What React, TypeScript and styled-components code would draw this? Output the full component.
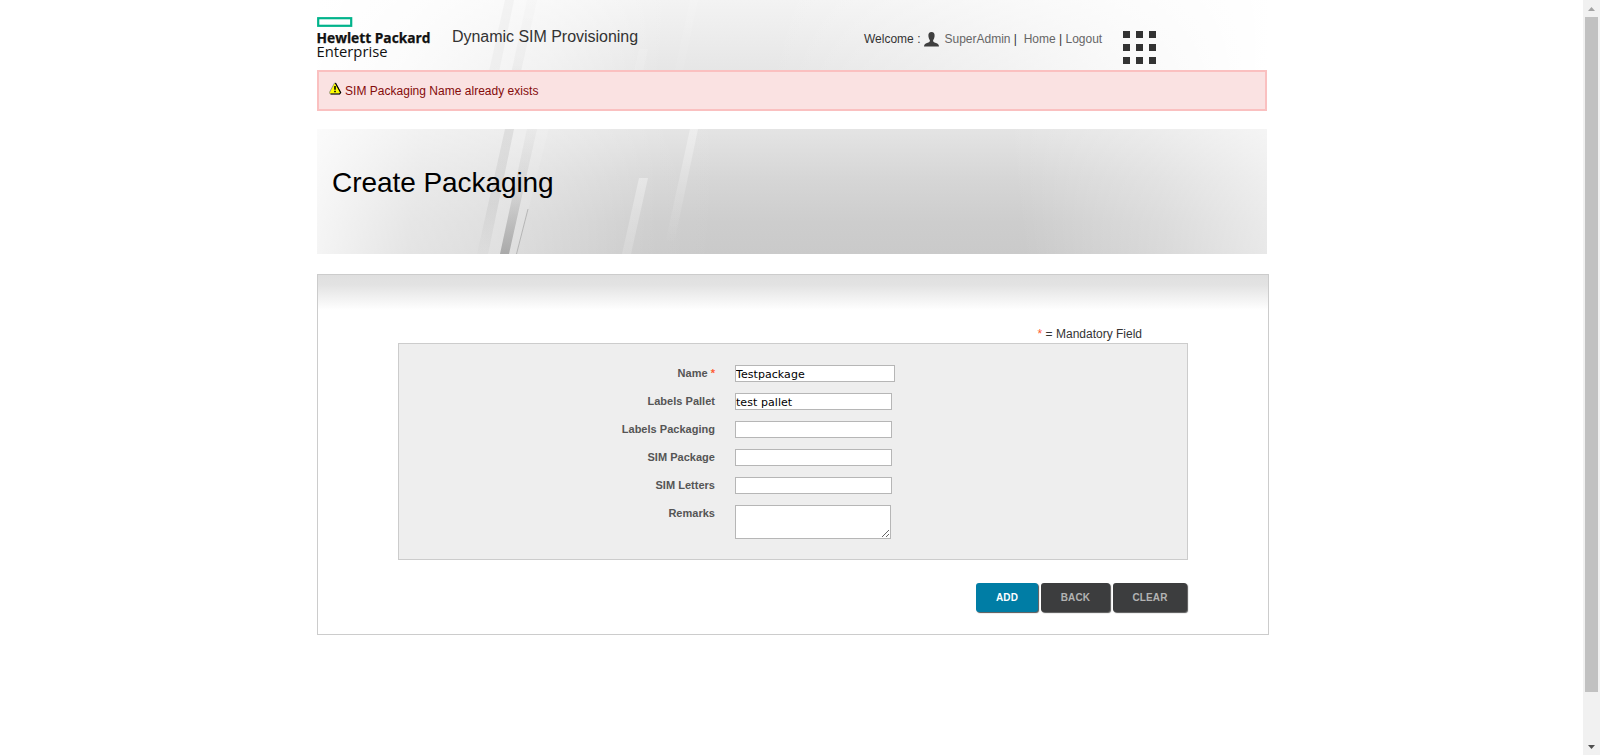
import React from "react";
import styled, { createGlobalStyle } from "styled-components";

const GlobalStyle = createGlobalStyle`
  * { box-sizing: border-box; }
  body {
    margin: 0;
    background: #fff;
    overflow: hidden;
    font-family: "Liberation Sans", Arial, sans-serif;
    font-size: 12px;
    line-height: 14px;
    color: #333;
  }
`;

const Viewport = styled.div`
  display: flex;
  height: 755px;
`;

const Main = styled.main`
  flex: 1;
  padding-left: 317px;
`;

const Header = styled.header`
  position: relative;
  isolation: isolate;
  display: flex;
  align-items: flex-start;
  width: 950px;
  height: 70px;
  overflow: hidden;
  background:
    linear-gradient(98deg, #fff 0%, rgba(255, 255, 255, 0.85) 10%, rgba(255, 255, 255, 0.45) 25%, rgba(255, 255, 255, 0) 37%, rgba(255, 255, 255, 0) 48%, rgba(255, 255, 255, 0.3) 64%, rgba(255, 255, 255, 0.75) 84%, #fff 100%),
    linear-gradient(180deg, #f3f3f3, #e6e6e6);
`;

const Logo = styled.svg`
  display: block;
  width: 120px;
  height: 50px;
  margin-top: 15px;
`;

const AppTitle = styled.div`
  width: 412px;
  margin: 28px 0 0 15px;
  font-size: 16px;
  line-height: 18px;
  letter-spacing: -0.03px;
`;

const UserMenu = styled.nav`
  display: flex;
  width: 259px;
  margin-top: 32px;
  line-height: 15px;
  white-space: pre;
`;

const Link = styled.a`
  color: #666;
`;

const UserIcon = styled.svg`
  width: 15px;
  height: 15px;
  margin: 0 5px 0 4px;
`;

const AppGrid = styled.div`
  display: grid;
  grid-template-columns: repeat(3, 7px);
  grid-auto-rows: 7px;
  gap: 6px;
  margin-top: 31px;
`;

const Dot = styled.span`
  background: #333;
`;

const Alert = styled.div`
  display: flex;
  width: 950px;
  height: 41px;
  padding: 10px 0 0 10px;
  border: 2px solid #fac0c0;
  background: #fae2e2;
  color: #840b0b;
`;

const AlertIcon = styled.svg`
  width: 13px;
  height: 13px;
  margin-right: 3px;
`;

const AlertText = styled.span`
  margin-top: 2px;
  letter-spacing: 0.02px;
`;

const Banner = styled.section`
  position: relative;
  isolation: isolate;
  display: flex;
  width: 950px;
  height: 125px;
  margin-top: 18px;
  background:
    linear-gradient(97deg, rgba(255, 255, 255, 0.85) 0%, rgba(255, 255, 255, 0.5) 11%, rgba(255, 255, 255, 0.3) 24%, rgba(255, 255, 255, 0.05) 36%, rgba(255, 255, 255, 0) 43%),
    linear-gradient(262deg, rgba(255, 255, 255, 0.62) 0%, rgba(255, 255, 255, 0.3) 12%, rgba(255, 255, 255, 0) 27%),
    linear-gradient(180deg, #e4e4e4 0%, #d6d6d6 40%, #cdcdcd 75%, #cacaca 100%);
`;

const StreaksSvg = styled.svg<{ $opacity: number }>`
  position: absolute;
  top: 0;
  left: 0;
  z-index: -1;
  width: 950px;
  height: 125px;
  opacity: ${(p) => p.$opacity};
`;

const Heading = styled.h1`
  margin: 38px 0 0 15px;
  font-size: 28px;
  line-height: 32px;
  font-weight: normal;
  letter-spacing: -0.06px;
  color: #000;
`;

const Panel = styled.section`
  display: flex;
  flex-direction: column;
  width: 952px;
  height: 361px;
  margin-top: 20px;
  padding: 0 80px;
  border: 1px solid #ccc;
  background: linear-gradient(180deg, #dfdfdf 0, #e3e3e3 10px, #fff 35px) no-repeat;
`;

const MandatoryNote = styled.div`
  margin-top: 52px;
  padding-right: 46px;
  height: 16px;
  text-align: right;
`;

const Star = styled.span`
  color: #ff5c33;
`;

const FormBox = styled.div`
  display: flex;
  flex-direction: column;
  height: 217px;
  padding-top: 21px;
  border: 1px solid #ccc;
  background: #eee;
`;

const FieldRow = styled.div`
  display: flex;
  align-items: flex-start;
  height: 28px;
`;

const Label = styled.label`
  width: 316px;
  margin-right: 20px;
  padding-top: 2px;
  text-align: right;
  font-size: 11px;
  line-height: 13px;
  font-weight: bold;
  letter-spacing: 0.02px;
  color: #555;
`;

const Input = styled.input<{ $width: number }>`
  width: ${(p) => p.$width}px;
  height: 17px;
  padding: 2px 0 0;
  border: 1px solid #b6b6b6;
  background: #fff;
  color: #000;
  font-family: "DejaVu Sans", Verdana, sans-serif;
  font-size: 11px;
  letter-spacing: 0.06px;
  outline: none;
`;

const TextArea = styled.textarea`
  width: 156px;
  height: 34px;
  padding: 1px;
  border: 1px solid #b6b6b6;
  background: #fff;
  outline: none;
`;

const Actions = styled.div`
  display: flex;
  justify-content: flex-end;
  gap: 3px;
  margin: 23px 1px 0 0;
`;

const Button = styled.button<{ $primary?: boolean; $width: number }>`
  width: ${(p) => p.$width}px;
  height: 29px;
  padding: 0;
  border: 0;
  border-radius: 3px;
  background: ${(p) => (p.$primary ? "#007da5" : "#3c3d3e")};
  color: ${(p) => (p.$primary ? "#fff" : "#b3b3b3")};
  box-shadow: 1px 1px 1px #555;
  font-family: inherit;
  font-size: 10px;
  letter-spacing: 0.15px;
  font-weight: bold;
`;

const Scrollbar = styled.aside`
  display: flex;
  flex-direction: column;
  align-items: center;
  width: 17px;
  background: #f1f1f1;
`;

const Arrow = styled.svg`
  width: 17px;
  height: 17px;
`;

const Thumb = styled.div`
  width: 13px;
  height: 675px;
  margin-bottom: 46px;
  background: #c1c1c1;
`;

const fields = [
  { label: "Name", value: "Testpackage", width: 160, required: true },
  { label: "Labels Pallet", value: "test pallet", width: 157 },
  { label: "Labels Packaging", value: "", width: 157 },
  { label: "SIM Package", value: "", width: 157 },
  { label: "SIM Letters", value: "", width: 157 },
];

// Slanted light and dark bands shared by the header and the page banner.
function Streaks({ id, opacity = 1 }: { id: string; opacity?: number }) {
  return (
    <StreaksSvg viewBox="0 0 950 125" $opacity={opacity}>
      <defs>
        <linearGradient id={`${id}-down`} x1="0" y1="0" x2="0" y2="1">
          <stop offset="0" stopColor="#888" stopOpacity=".15" />
          <stop offset=".6" stopColor="#888" stopOpacity=".13" />
          <stop offset="1" stopColor="#888" stopOpacity=".02" />
        </linearGradient>
        <linearGradient id={`${id}-up`} x1="0" y1="0" x2="0" y2="1">
          <stop offset="0" stopColor="#777" stopOpacity=".03" />
          <stop offset=".5" stopColor="#777" stopOpacity=".12" />
          <stop offset="1" stopColor="#777" stopOpacity=".5" />
        </linearGradient>
        <linearGradient id={`${id}-shine`} x1="0" y1="0" x2="0" y2="1">
          <stop offset="0" stopColor="#fff" stopOpacity=".35" />
          <stop offset="1" stopColor="#fff" stopOpacity=".15" />
        </linearGradient>
        <linearGradient id={`${id}-out`} x1="0" y1="0" x2="0" y2="1">
          <stop offset="0" stopColor="#fff" stopOpacity=".35" />
          <stop offset="1" stopColor="#fff" stopOpacity="0" />
        </linearGradient>
      </defs>
      <path d="M188 0h9l-26 125h-11Z" fill={`url(#${id}-down)`} />
      <path d="M197 0h13l-27 125h-12Z" fill="#fff" opacity=".1" />
      <path d="M210 0h10l-28 125h-9Z" fill={`url(#${id}-up)`} />
      <path d="M220 0h12l-32 125h-8Z" fill="#fff" opacity=".1" />
      <path d="M211 80 199.500 125" fill="none" stroke="#999" strokeWidth=".6" />
      <path d="M322 49h9l-17 76h-9Z" fill={`url(#${id}-shine)`} />
      <path d="M373 0h8l-24 115h-9Z" fill={`url(#${id}-out)`} />
    </StreaksSvg>
  );
}

export default function App() {
  return (
    <Viewport>
      <GlobalStyle />
      <Main>
        <Header>
          <Streaks id="header" opacity={0.4} />
          <Logo viewBox="0 0 120 50">
            <rect x="1.2" y="3.2" width="33" height="7.6" fill="none" stroke="#01b38b" strokeWidth="2.2" />
            <g fill="#111" fontFamily="Open Sans, sans-serif">
              <text x="-0.5" y="28" fontSize="13.6" fontWeight="700" stroke="#111" strokeWidth=".25" textLength="114" lengthAdjust="spacingAndGlyphs">Hewlett Packard</text>
              <text x="-0.5" y="42.4" fontSize="13.6" textLength="71" lengthAdjust="spacingAndGlyphs">Enterprise</text>
            </g>
          </Logo>
          <AppTitle>Dynamic SIM Provisioning</AppTitle>
          <UserMenu>
            <span>Welcome :</span>
            <UserIcon viewBox="0 0 15 15">
              <path d="M7.5 0C5.3 0 4.2 1.5 4.4 4c.1 2 .9 3.300 1.500 4.300C6 9.800 5.200 10.300 3 11 1.200 11.600.2 12.300 0 14.500h15c-.2-2.200-1.200-2.900-3-3.500-2.200-.7-3-1.200-2.900-2.700.6-1 1.400-2.300 1.500-4.300C10.800 1.500 9.700 0 7.500 0Z" fill="#3f3f3f" />
            </UserIcon>
            <Link>SuperAdmin</Link>
            <span> |  </span>
            <Link>Home</Link>
            <span> | </span>
            <Link>Logout</Link>
          </UserMenu>
          <AppGrid>
            {Array.from({ length: 9 }, (_, i) => (
              <Dot key={i} />
            ))}
          </AppGrid>
        </Header>

        <Alert>
          <AlertIcon viewBox="0 0 13 13">
            <path d="M5.500 1 .4 10.500 1.200 12h9.500l1-1.500L6.500 1Z" fill="#ff0" stroke="#888" strokeWidth=".8" />
            <path d="M6.400 1l5.200 9.500-1 1.500H1.600" fill="none" stroke="#000" strokeWidth="1.200" />
            <path d="M6 4v3.800M6 8.800v1.400" stroke="#000" strokeWidth="1.600" />
          </AlertIcon>
          <AlertText>SIM Packaging Name already exists</AlertText>
        </Alert>

        <Banner>
          <Streaks id="banner" />
          <Heading>Create Packaging</Heading>
        </Banner>

        <Panel>
          <MandatoryNote>
            <Star>*</Star> = Mandatory Field
          </MandatoryNote>
          <FormBox>
            {fields.map((f) => (
              <FieldRow key={f.label}>
                <Label>
                  {f.label}
                  {f.required && <Star> *</Star>}
                </Label>
                <Input $width={f.width} defaultValue={f.value} />
              </FieldRow>
            ))}
            <FieldRow>
              <Label>Remarks</Label>
              <TextArea />
            </FieldRow>
          </FormBox>
          <Actions>
            <Button $primary $width={62}>ADD</Button>
            <Button $width={69}>BACK</Button>
            <Button $width={74}>CLEAR</Button>
          </Actions>
        </Panel>
      </Main>
      <Scrollbar>
        <Arrow viewBox="0 0 17 17">
          <path d="M5 11h7L8.500 7Z" fill="#a3a3a3" />
        </Arrow>
        <Thumb />
        <Arrow viewBox="0 0 17 17">
          <path d="M5 7h7l-3.500 4Z" fill="#505050" />
        </Arrow>
      </Scrollbar>
    </Viewport>
  );
}
